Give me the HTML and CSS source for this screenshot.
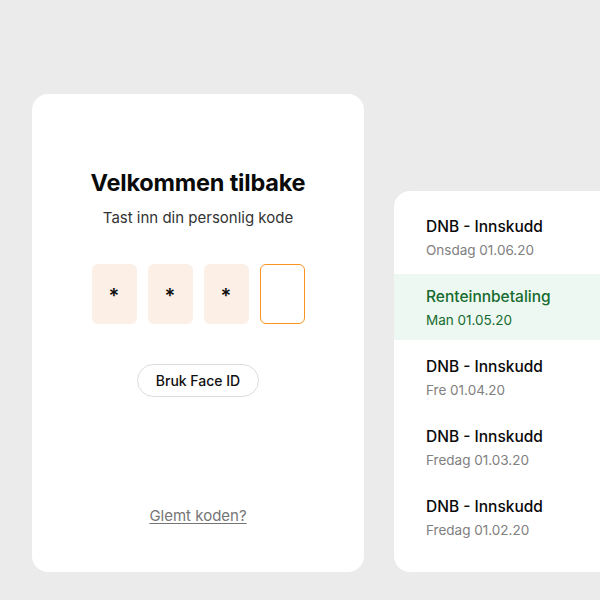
FILE: index.html
```html
<!DOCTYPE html>
<html lang="no">
<head>
<meta charset="utf-8">
<link rel="stylesheet" href="styles.css">
</head>
<body>
<div class="stage">
  <section class="login-card">
    <h1 class="title">Velkommen tilbake</h1>
    <p class="subtitle">Tast inn din personlig kode</p>
    <div class="pin">
      <div class="pin-box">*</div>
      <div class="pin-box">*</div>
      <div class="pin-box">*</div>
      <div class="pin-box active"></div>
    </div>
    <button class="face-btn">Bruk Face ID</button>
    <a class="forgot" href="#">Glemt koden?</a>
  </section>
  <section class="list-card">
    <div class="row"><div class="row-title">DNB - Innskudd</div><div class="row-date">Onsdag 01.06.20</div></div>
    <div class="row highlight"><div class="row-title">Renteinnbetaling</div><div class="row-date">Man 01.05.20</div></div>
    <div class="row"><div class="row-title">DNB - Innskudd</div><div class="row-date">Fre 01.04.20</div></div>
    <div class="row"><div class="row-title">DNB - Innskudd</div><div class="row-date">Fredag 01.03.20</div></div>
    <div class="row"><div class="row-title">DNB - Innskudd</div><div class="row-date">Fredag 01.02.20</div></div>
  </section>
</div>
</body>
</html>
```
FILE: styles.css
```css
html, body {
  margin: 0;
  padding: 0;
}
body {
  background: #ebebeb;
  font-family: Inter, "Noto Sans", sans-serif;
  width: 600px;
  height: 600px;
  overflow: hidden;
}
.stage {
  display: flex;
  align-items: flex-start;
  gap: 30px;
  padding: 94px 0 0 32px;
}
.login-card {
  flex: 0 0 332px;
  height: 478px;
  box-sizing: border-box;
  background: #fff;
  border-radius: 16px;
  display: flex;
  flex-direction: column;
  align-items: center;
  padding: 75px 0 46px;
}
.title {
  margin: 0;
  font-size: 23.5px;
  line-height: 28px;
  font-weight: 700;
  color: #0a0a0a;
  letter-spacing: -0.2px;
}
.subtitle {
  margin: 11px 0 0;
  font-size: 15px;
  line-height: 20px;
  color: #333;
}
.pin {
  display: flex;
  gap: 11px;
  margin-top: 36px;
}
.pin-box {
  width: 45px;
  height: 60px;
  box-sizing: border-box;
  border-radius: 6px;
  background: #fcefe6;
  display: flex;
  align-items: center;
  justify-content: center;
  font-size: 20px;
  font-weight: 600;
  color: #111;
  padding-top: 4px;
}
.pin-box.active {
  background: #fff;
  border: 1.5px solid #f7931e;
}
.face-btn {
  margin-top: 40px;
  height: 33px;
  padding: 0 18px;
  border: 1px solid #dcdcdc;
  border-radius: 17px;
  background: #fff;
  font-family: inherit;
  font-size: 14px;
  font-weight: 500;
  color: #111;
}
.forgot {
  margin-top: auto;
  font-size: 15px;
  line-height: 20px;
  color: #757575;
  text-decoration: underline;
  text-underline-offset: 2px;
}
.list-card {
  flex: 0 0 240px;
  margin-top: 97px;
  height: 381px;
  box-sizing: border-box;
  background: #fff;
  border-radius: 16px;
  padding-top: 13px;
  display: flex;
  flex-direction: column;
  gap: 4px;
}
.row {
  padding: 13px 32px 0;
  height: 66px;
  box-sizing: border-box;
}
.row-title {
  font-size: 15.5px;
  line-height: 20px;
  font-weight: 500;
  color: #0a0a0a;
}
.row-date {
  margin-top: 4px;
  font-size: 13.5px;
  line-height: 18px;
  color: #808080;
}
.row.highlight {
  background: #eef8f2;
}
.row.highlight .row-title,
.row.highlight .row-date {
  color: #166b2f;
}
```
